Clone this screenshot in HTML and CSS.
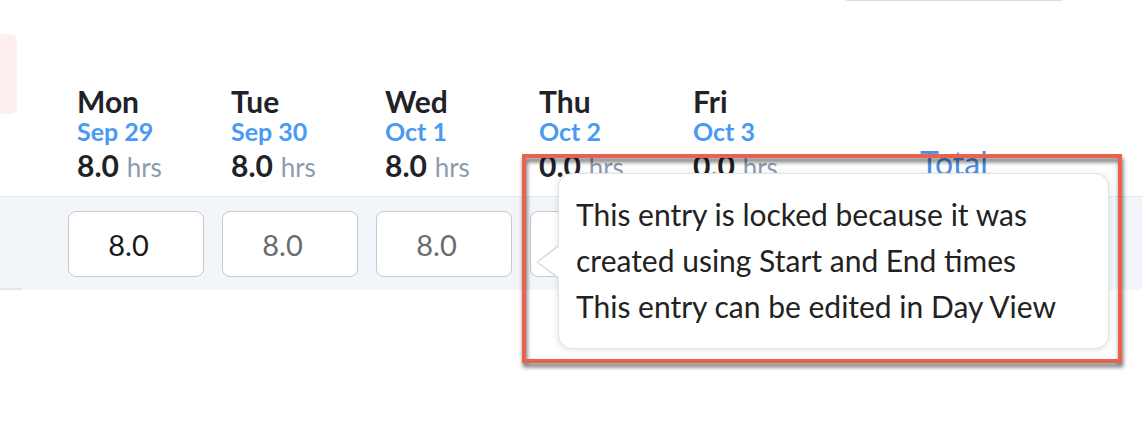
FILE: index.html
```html
<!DOCTYPE html>
<html lang="en">
<head>
    <meta charset="UTF-8">
    <meta name="viewport" content="width=device-width, initial-scale=1.0">
    <title>Week Timesheet</title>
    <link rel="stylesheet" href="styles.css">
</head>
<body>

<div class="page">
    <div class="topbar">
        <div class="filter-box"></div>
    </div>

    <div class="week-head">
        <div class="side"><div class="prev-tab"></div></div>

        <div class="day">
            <div class="day-name">Mon</div>
            <div class="day-date">Sep 29</div>
            <div class="day-hours"><b>8.0</b> <span>hrs</span></div>
        </div>
        <div class="day">
            <div class="day-name">Tue</div>
            <div class="day-date">Sep 30</div>
            <div class="day-hours"><b>8.0</b> <span>hrs</span></div>
        </div>
        <div class="day">
            <div class="day-name">Wed</div>
            <div class="day-date">Oct 1</div>
            <div class="day-hours"><b>8.0</b> <span>hrs</span></div>
        </div>
        <div class="day">
            <div class="day-name">Thu</div>
            <div class="day-date">Oct 2</div>
            <div class="day-hours"><b>0.0</b> <span>hrs</span></div>
        </div>
        <div class="day">
            <div class="day-name">Fri</div>
            <div class="day-date">Oct 3</div>
            <div class="day-hours"><b>0.0</b> <span>hrs</span></div>
        </div>

        <div class="total-head">Total</div>
    </div>

    <div class="entry-row">
        <div class="side"><div class="stub"></div></div>
        <div class="cell"><input class="hours-input" type="text" value="8.0"></div>
        <div class="cell"><input class="hours-input locked" type="text" value="8.0" disabled></div>
        <div class="cell"><input class="hours-input locked" type="text" value="8.0" disabled></div>
        <div class="cell"><input class="hours-input locked" type="text" value="" disabled></div>
        <div class="cell"><input class="hours-input" type="text" value=""></div>
    </div>

    <!-- tooltip shown on the locked Thursday entry -->
    <div class="tooltip">
        This entry is locked because it was<br>
        created using Start and End times<br>
        This entry can be edited in Day View
    </div>

    <div class="annotation"></div>
</div>

</body>
</html>
```

FILE: styles.css
```css
body {
    margin: 0;
    padding: 0;
    background: #ffffff;
    font-family: Lato, "Open Sans", sans-serif;
    color: #1f2328;
}
.page {
    position: relative;
    width: 1142px;
    height: 436px;
    overflow: hidden;
}
.topbar {
    display: flex;
    justify-content: flex-end;
    padding-right: 74px;
    height: 0;
}
.filter-box {
    width: 228px;
    height: 38px;
    margin-top: -37px;
    box-sizing: border-box;
    border: 1px solid #dcdde3;
    border-radius: 8px;
    background: #ffffff;
}
.week-head {
    display: flex;
    align-items: flex-start;
}
.side {
    width: 68px;
    flex-shrink: 0;
}
.prev-tab {
    width: 17px;
    height: 80px;
    margin-top: 34px;
    background: #fdeef0;
    border-radius: 0 6px 6px 0;
}
.day {
    width: 154px;
    flex-shrink: 0;
    box-sizing: border-box;
    padding: 86px 0 0 9px;
}
.day-name {
    font-size: 30px;
    font-weight: bold;
    line-height: 30px;
}
.day-date {
    font-size: 25px;
    font-weight: bold;
    line-height: 30px;
    color: #4a99f4;
}
.day-hours {
    font-size: 30px;
    line-height: 38px;
}
.day-hours b {
    line-height: 1;
}
.day-hours span {
    font-size: 26px;
    line-height: 1;
    color: #8c9caf;
}
.total-head {
    padding: 145px 0 0 82px;
    font-size: 32px;
    line-height: 36px;
    color: #4a90e2;
}
.entry-row {
    display: flex;
    margin-top: 12px;
    padding: 14px 0 13px;
    border-top: 1px solid #e3e8ef;
    background: #f2f5f9;
}
.entry-row .side {
    align-self: stretch;
    margin-bottom: -13px;
}
.stub {
    width: 22px;
    height: 100%;
    box-sizing: border-box;
    border-bottom: 2px solid #e2e8ef;
}
.cell {
    width: 154px;
    flex-shrink: 0;
}
.hours-input {
    width: 136px;
    height: 66px;
    box-sizing: border-box;
    padding: 0 15px 0 0;
    border: 1px solid #c5c8cc;
    border-radius: 8px;
    background: #ffffff;
    font-family: Lato, sans-serif;
    font-size: 29px;
    color: #1a1a1a;
    text-align: center;
}
.hours-input.locked {
    color: #6b6b6b;
}
.tooltip {
    position: absolute;
    left: 558px;
    top: 173px;
    width: 551px;
    height: 176px;
    box-sizing: border-box;
    padding: 17px 17px;
    background: #ffffff;
    border: 1px solid #e3e3e3;
    border-radius: 14px;
    box-shadow: 0 1px 6px rgba(0,0,0,0.12);
    font-size: 30px;
    line-height: 46px;
    color: #222222;
}
.tooltip::before {
    content: "";
    position: absolute;
    left: -23px;
    top: 71px;
    border-right: 22px solid #dcdcdc;
    border-top: 17px solid transparent;
    border-bottom: 17px solid transparent;
}
.tooltip::after {
    content: "";
    position: absolute;
    left: -21px;
    top: 72px;
    border-right: 22px solid #ffffff;
    border-top: 16px solid transparent;
    border-bottom: 16px solid transparent;
}
.annotation {
    position: absolute;
    left: 522px;
    top: 154px;
    width: 600px;
    height: 209px;
    box-sizing: border-box;
    border: 4px solid #e8634f;
    filter: drop-shadow(1px 4px 2px rgba(0,0,0,0.6));
}
```
